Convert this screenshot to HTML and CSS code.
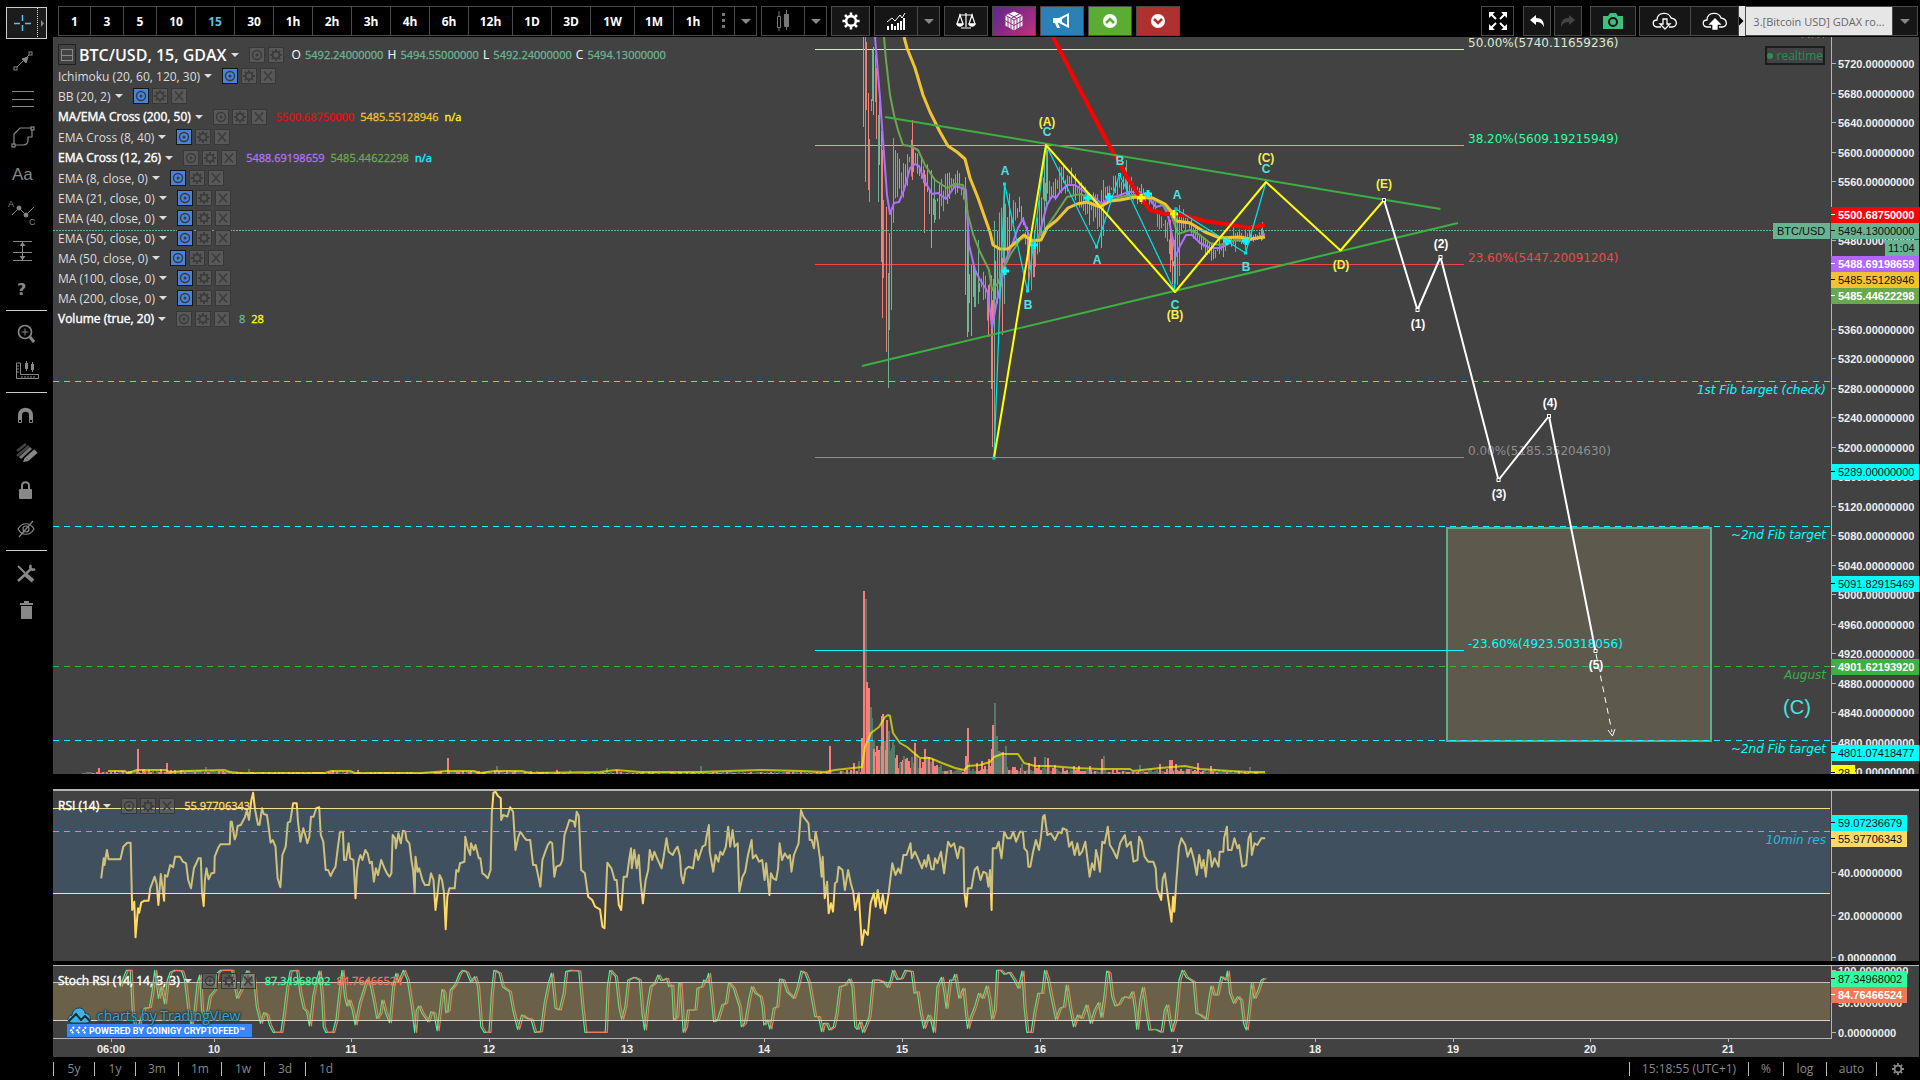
FILE: index.html
```html
<!DOCTYPE html>
<html lang="en">
<head>
  <meta charset="UTF-8">
  <title>BTC/USD, 15, GDAX</title>
  <link rel="stylesheet" href="styles.css">
</head>
<body>

  <!-- Shared icons -->
  <svg class="defs">
    <symbol id="i-eye" viewBox="0 0 14 14"><circle cx="7" cy="7" r="4.5" fill="none" stroke="#3a3a3a" stroke-width="1.4"/><circle cx="7" cy="7" r="1.5" fill="#3a3a3a"/></symbol>
    <symbol id="i-gear" viewBox="0 0 14 14"><circle cx="7" cy="7" r="3.4" fill="none" stroke="currentColor" stroke-width="1.8"/><path d="M7 1v2.500M7 10.500v2.500M1 7h2.500M10.500 7h2.500M2.800 2.800l1.800 1.800M9.400 9.400l1.800 1.800M11.200 2.800L9.400 4.600M4.600 9.400l-1.800 1.800" stroke="currentColor" stroke-width="1.800"/></symbol>
    <symbol id="i-x" viewBox="0 0 14 14"><path d="M3 2.500l8 9M11 2.500l-8 9" stroke="currentColor" stroke-width="1.600"/></symbol>
  </svg>

  <div class="app">
    <nav class="sidebar">
      <button class="tool active" aria-label="Cross"><svg width="41" height="32"><path d="M16.500 8v6M16.500 18v6M8 16.500h6M19 16.500h6" stroke="#5bc0e8" stroke-width="1.500"/><path d="M31.500 1v30" stroke="#ddd" stroke-dasharray="1 1"/><path d="M35 13l3 3.500-3 3.500z" fill="#888"/></svg></button>
      <button class="tool" aria-label="Trend line"><svg width="44" height="32" fill="none" stroke="#888"><rect x="8" y="22" width="3" height="3"/><rect x="23" y="7" width="3" height="3"/><path d="M11 22L23 10"/><path d="M16 14l6-2-2 6z" fill="#888"/></svg></button>
      <button class="tool" aria-label="Channels"><svg width="44" height="32"><path d="M6 8.500h22M6 16.500h22M6 23.500h22" stroke="#888"/></svg></button>
      <button class="tool" aria-label="Shapes"><svg width="44" height="32" fill="none" stroke="#888" stroke-width="1.200"><path d="M8 23V13l6-6h12M26 9v7h-4v3c0 3-2 5-5 5h-8"/><rect x="6" y="23" width="3" height="3"/><rect x="25" y="6" width="3" height="3"/></svg></button>
      <button class="tool aa">Aa</button>
      <button class="tool" aria-label="Patterns"><svg width="44" height="36" fill="none" stroke="#888"><path d="M6 20l7-7 7 7 8-8"/><circle cx="13" cy="13" r="2" fill="#888"/><circle cx="20" cy="20" r="2" fill="#888"/><text x="2" y="12" class="tiny">A</text><text x="23" y="30" class="tiny">C</text></svg></button>
      <button class="tool" aria-label="Forecast"><svg width="44" height="32"><path d="M7 6.500h19M7 17.500h19M7 25.500h19M16.500 7v18" stroke="#888"/><path d="M13.500 11l3-4 3 4zM13.500 21l3 4 3-4z" fill="#888"/></svg></button>
      <button class="tool help">?</button>
      <hr>
      <button class="tool" aria-label="Zoom in"><svg width="44" height="32" fill="none" stroke="#888"><circle cx="19" cy="15" r="6.500" stroke-width="1.700"/><path d="M15.500 15h7M19 11.500v7"/><path d="M24 20l4 5" stroke-width="3"/></svg></button>
      <button class="tool" aria-label="Measure"><svg width="44" height="32" fill="none" stroke="#888"><path d="M10.500 8v15.500h22v-4h-18V8z"/><path d="M11 11h2M11 14h2M11 17h2M16 21v2M19 21v2M22 21v2M25 21v2M28 21v2"/><path d="M20.500 6v10M26.500 7v10"/><path d="M20.500 8v6M26.500 9v6" stroke-width="3"/></svg></button>
      <hr>
      <button class="tool" aria-label="Magnet"><svg width="44" height="32" fill="none" stroke="#888"><path d="M14 23v-7c0-7 11-7 11 0v7" stroke-width="4"/><path d="M12.500 20.500h3v3h-3zM23.500 20.500h3v3h-3z" fill="#000"/></svg></button>
      <button class="tool" aria-label="Draw"><svg width="44" height="32"><path d="M11 14L20 7M11 19L23 9" stroke="#444" stroke-width="2.500"/><path d="M14 21L25 11" stroke="#777" stroke-width="3"/><path d="M21 22L30 14" stroke="#888" stroke-width="5"/><path d="M17 25l2-5 4 4z" fill="#888"/></svg></button>
      <button class="tool" aria-label="Lock"><svg width="44" height="32"><rect x="13" y="14" width="13" height="10" rx="1" fill="#888"/><path d="M16 14v-3c0-5 7-5 7 0v3" fill="none" stroke="#888" stroke-width="2"/></svg></button>
      <button class="tool" aria-label="Hide"><svg width="44" height="32" fill="none" stroke="#888" stroke-width="1.200"><path d="M12 16c4-7 12-7 16 0-4 7-12 7-16 0zM27 8L13 24"/><circle cx="20" cy="16" r="3"/></svg></button>
      <hr>
      <button class="tool" aria-label="Tools"><svg width="44" height="32" fill="none" stroke="#888"><path d="M12 9l7 7" stroke-width="2"/><path d="M19 17l8 7" stroke-width="4"/><path d="M12 24L25 12" stroke-width="2.500"/><path d="M25 8c-2 3 1 6 4 4" stroke-width="2.500"/></svg></button>
      <button class="tool" aria-label="Remove"><svg width="44" height="32" fill="#888"><path d="M15 11h11v13H15zM14 8h13v2H14zM18 6h5v2h-5z"/></svg></button>
    </nav>

    <main class="workspace">
      <header class="topbar">
        <div class="group intervals">
          <button class="one">1</button><button class="one">3</button><button class="one">5</button><button>10</button><button class="on">15</button><button>30</button><button>1h</button><button>2h</button><button>3h</button><button>4h</button><button>6h</button><button class="long">12h</button><button>1D</button><button>3D</button><button class="long">1W</button><button>1M</button><button>1h</button><button class="narrow" aria-label="More"><svg width="4" height="18" fill="#777"><path d="M0 1h3v3H0zM0 7h3v3H0zM0 13h3v3H0z"/></svg></button><button class="narrow caret" aria-label="Intervals"></button>
        </div>
        <div class="group">
          <button class="icon" aria-label="Chart style"><svg width="14" height="24" fill="none" stroke="#777"><path d="M3 2v20M10.500 1v20"/><path d="M1.500 7.500h3v11h-3z" fill="#000"/><path d="M8.500 5.500h4v12h-4z" fill="#777"/></svg></button><button class="narrow caret" aria-label="Styles"></button>
        </div>
        <div class="group"><button class="icon dark gear" aria-label="Settings"><svg width="20" height="20"><use href="#i-gear"/></svg></button></div>
        <div class="group">
          <button class="icon dark" aria-label="Indicators"><svg width="20" height="18" fill="none" stroke="#fff"><path d="M1 10l5-4 3 3 5-6 2 3 3-5"/><path d="M2 14v4M6 12v6M9 14v4M12 11v7M15 9v9M18 6v12" stroke-width="2"/></svg></button><button class="narrow dark caret" aria-label="Templates"></button>
        </div>
        <div class="group"><button class="icon dark" aria-label="Compare"><svg width="20" height="18" fill="none" stroke="#fff" stroke-width="1.200"><path d="M3 3h14M10 1v14M5 16h10M4 3L1 12h6zM16 3l-3 9h6z"/><path d="M1 12c1 3 5 3 6 0zM13 12c1 3 5 3 6 0z" fill="#fff"/></svg></button></div>
        <div class="group"><button class="icon cube" aria-label="Blocks"><svg width="22" height="22" viewBox="0 0 22 22" fill="#fff" stroke="#8a2a80" stroke-width="1"><path d="M11 1l9 4v11l-9 5-9-5V5z"/><path d="M11 10v11M2 5l9 5 9-5M5 3.500l9 5v11M17 3.500l-9 5v11M2 10.500l9 5 9-5M5 7v11M17 7v11" fill="none"/></svg></button></div>
        <div class="group"><button class="icon blue" aria-label="Alerts"><svg width="18" height="16" fill="#fff"><path d="M0 5h6v5H0zM2 10h3l2 5H4zM6 5l10-5v15L6 10z"/><path d="M9 6l5-3v9l-5-3z" fill="#2b80b5"/></svg></button></div>
        <div class="group"><button class="icon green" aria-label="Buy"><svg width="16" height="16"><circle cx="8" cy="8" r="7" fill="#fff"/><path d="M4 10l4-4 4 4" fill="none" stroke="#5aad32" stroke-width="2.500"/></svg></button></div>
        <div class="group"><button class="icon red" aria-label="Sell"><svg width="16" height="16"><circle cx="8" cy="8" r="7" fill="#fff"/><path d="M4 6l4 4 4-4" fill="none" stroke="#b03030" stroke-width="2.500"/></svg></button></div>

        <div class="right">
          <button class="w34" aria-label="Fullscreen"><svg width="18" height="18" fill="#fff" stroke="#fff" stroke-width="2"><path d="M2 2l5 5M16 2l-5 5M2 16l5-5M16 16l-5-5"/><path d="M0 0h6L0 6zM18 0h-6l6 6zM0 18h6l-6-6zM18 18h-6l6-6z" stroke="none"/></svg></button>
          <button class="dark w28" aria-label="Undo"><svg width="14" height="12" fill="#fff"><path d="M0 5l6-5v3c6 0 8 3 8 9-2-4-4-5-8-5v3z"/></svg></button>
          <button class="dark w28 redo" aria-label="Redo"><svg width="14" height="12" fill="#444"><path d="M14 5L8 0v3C2 3 0 6 0 12c2-4 4-5 8-5v3z"/></svg></button>
          <button class="dark w46" aria-label="Snapshot"><svg width="20" height="16"><path d="M0 3h5l2-3h6l2 3h5v13H0z" fill="#41bd80"/><circle cx="10" cy="9" r="4" fill="none" stroke="#111" stroke-width="2"/></svg></button>
          <div class="group">
            <button class="dark w52" aria-label="Load"><svg width="26" height="18" fill="none" stroke="#fff" stroke-width="1.300"><path d="M9 15H5c-5-1-5-7 0-7 0-8 12-9 14-2 7 1 7 9 1 9h-3"/><path d="M11 7h4v5h3l-5 5-5-5h3z"/></svg></button><button class="dark w48" aria-label="Save"><svg width="26" height="18" fill="none" stroke="#fff" stroke-width="1.300"><path d="M9 15H5c-5-1-5-7 0-7 0-8 12-9 14-2 7 1 7 9 1 9h-3"/><path d="M11 17h4v-5h3l-5-5-5 5h3z" fill="#fff"/></svg></button><span class="notch"></span><button class="layout">3.[Bitcoin USD] GDAX ro...</button><button class="dark narrow caret last" aria-label="Layouts"></button>
          </div>
        </div>
      </header>

      <section class="pane">
        <svg id="price" viewBox="53 37 1866 737"></svg>
        <div class="legend" id="legend">
          <div class="title"><button class="collapse" aria-label="Collapse"></button><span class="symbol">BTC/USD, 15, GDAX</span><i></i>
            <button class="mini"><svg><use href="#i-eye"/></svg></button><button class="mini"><svg><use href="#i-gear"/></svg></button>
            <span class="ohlc">O <b>5492.24000000</b> H <b>5494.55000000</b> L <b>5492.24000000</b> C <b>5494.13000000</b></span>
          </div>
        </div>
        <span class="realtime">realtime</span>
      </section>

      <section class="pane rsi">
        <svg id="rsi" viewBox="53 791 1866 170"></svg>
        <div class="legend" id="rsiLegend"></div>
      </section>

      <section class="pane stoch">
        <svg id="stoch" viewBox="53 966 1866 91"></svg>
        <div class="legend" id="stochLegend"></div>
        <div class="brand">
          <a href="#" class="tv"><svg width="24" height="17"><path d="M6 16c-6 0-7-7-1-8C6-1 17-1 18 6c7 1 7 10 1 10z" fill="#3bb3e4" stroke="#1d3c4c"/><path d="M2 14l7-7 5 6 4-4 5 5" fill="none" stroke="#1d2c34" stroke-width="2"/></svg><span>charts by TradingView</span></a>
          <a href="#" class="feed"><svg width="20" height="9" fill="none" stroke="#fff" stroke-width="2"><path d="M5 1L2 4.500 5 8M11 1L8 4.500 11 8M17 1l-3 3.500L17 8" stroke-dasharray="2 1"/></svg>POWERED BY COINIGY CRYPTOFEED™</a>
        </div>
      </section>

      <footer class="bottombar">
        <div class="ranges"><button class="short">5y</button><button class="short">1y</button><button>3m</button><button>1m</button><button>1w</button><button class="short">3d</button><button class="short">1d</button></div>
        <div class="scale"><button class="clock">15:18:55 (UTC+1)</button><button>%</button><button>log</button><button class="auto">auto</button><button aria-label="Properties"><svg width="14" height="14"><use href="#i-gear"/></svg></button></div>
      </footer>
    </main>
  </div>

  <script>
    const UP = '#6ab392', DOWN = '#f47f7b';

    // small seeded generator so the chart is the same on every load
    let seed = 11;
    function rnd() {
      seed = (seed * 16807) % 2147483647;
      return seed / 2147483647;
    }

    function line(x1, y1, x2, y2, color, extra) {
      return `<path d="M${x1} ${y1}L${x2} ${y2}" stroke="${color}" ${extra || ''}/>`;
    }

    function poly(points, color, width, extra) {
      return `<polyline points="${points}" fill="none" stroke="${color}" stroke-width="${width || 1}" stroke-linejoin="round" ${extra || ''}/>`;
    }

    function text(x, y, str, cls, color) {
      return `<text x="${x}" y="${y}" class="${cls}" fill="${color}">${str}</text>`;
    }

    function tag(y, str, bg, color, x2) {
      return `<rect x="1831" y="${y}" width="${(x2 || 1919) - 1831}" height="16" fill="${bg}"/>` +
        line(1831, y + 7.5, 1835, y + 7.5, color) +
        text(1838, y + 12, str, color === '#fff' ? 'axis' : 'tag', color);
    }

    function tick(y, str) {
      return line(1832, y, 1836, y, '#b5b5b5') + text(1838, y + 4, str, 'axis', '#eee');
    }

    // linear interpolation over [x, a, b] knots
    function at(knots, x) {
      for (let i = 1; i < knots.length; i++) {
        if (x <= knots[i][0]) {
          const p = knots[i - 1], q = knots[i], t = (x - p[0]) / (q[0] - p[0]);
          return p.map((v, k) => v + (q[k] - v) * t);
        }
      }
      return knots[knots.length - 1];
    }

    function shift(str, x0, sx, y0, sy, dx) {
      return str.split(' ').map(p => {
        const [x, y] = p.split(',').map(Number);
        return (x0 + x / sx + (dx || 0)).toFixed(1) + ',' + (y0 + y / sy).toFixed(1);
      }).join(' ');
    }

    // ---- price pane ----
    function drawPrice() {
      let s = '';

      // volume
      const bars = [[98,6,0],[137,25,0],[143,5,0],[160,5,0],[166,11,0],[205,7,1],[248,5,1],[332,4,0],[357,4,0],[447,16,0],[496,8,1],[556,4,0],[569,4,1],[606,6,1],[616,4,0],[700,8,1],[829,28,0],[853,11,0],[858,13,1],
        [861,36,0],[865,175,1],[863,183,0],[866,92,0],[868,86,0],[870,67,1],[871,56,1],[873,34,1],[873,25,0],[875,18,1],[876,28,0],[878,24,0],[880,28,1],[881,58,0],[882,60,0],[884,33,1],[885,24,0],[886,54,0],[888,43,1],[890,23,1],[891,26,1],[892,32,1],[893,29,1],[895,16,0],[896,19,0],[899,11,1],[903,18,1],[906,16,0],[908,13,0],[911,17,1],[914,31,0],[916,20,1],[919,15,0],[922,12,0],[924,25,0],[926,18,1],[928,17,0],[932,15,0],
        [965,18,0],[967,46,0],[968,12,1],[976,11,0],[981,13,0],[988,15,0],[991,25,0],[992,49,0],[994,71,1],[996,38,1],[998,23,1],[1000,22,1],[1002,22,0],[1004,18,1],[1005,28,1],[1021,10,1],[1028,11,0],[1034,17,0],[1044,17,1],[1047,16,0],[1054,9,0],[1073,8,0],[1078,8,0],[1089,8,0],[1101,15,0],[1103,18,1],[1139,9,1],[1159,10,0],[1169,14,0],[1171,14,0],[1175,10,0],[1197,11,0],[1210,8,0],[1249,7,1]];
      const volEnv = [[82,2],[130,3],[220,4],[240,2],[430,2],[520,3],[560,1],[830,2],[860,5],[862,25],[895,16],[915,14],[935,12],[945,5],[965,4],[985,10],[1005,13],[1015,8],[1045,9],[1070,5],[1130,3],[1165,6],[1190,5],[1220,4],[1265,1]];
      for (let x = 82; x < 1265; x += 2) {
        const h = Math.ceil(at(volEnv, x)[1] * (0.25 + rnd() * 0.75));
        s += `<rect x="${x}" y="${774 - h}" width="2" height="${h}" fill="${rnd() > 0.5 ? '#f47f7b' : '#557a6a'}"/>`;
      }
      bars.forEach(b => s += `<rect x="${b[0]}" y="${774 - b[1]}" width="2" height="${b[1]}" fill="${b[2] ? '#557a6a' : '#f47f7b'}"/>`);
      s += poly('108,771 125,771 128,773 137,770 165,770 170,772 186,771 224,770 230,772 240,773 325,773 331,771 350,771 355,773 422,773 447,771 474,771 480,773 495,771 522,771 530,773 600,772 616,770 640,772 700,772 760,770 800,771 825,772 835,770 862,767 865,747 871,733 879,727 885,717 888,715 890,716 893,733 900,743 907,747 914,753 920,758 930,758 942,763 955,768 964,770 968,766 980,765 990,762 994,757 1002,754 1018,754 1024,763 1035,766 1050,766 1075,768 1100,769 1130,769 1133,771 1160,768 1185,766 1200,769 1230,771 1250,772 1265,772', '#ffff00', 2, 'opacity="0.65"');

      // horizontal levels
      [[49.5,'#d9ead3','50.00%(5740.11659236)'],[145.5,'#2fff9f','38.20%(5609.19215949)'],[264.5,'#ee4a4a','23.60%(5447.20091204)'],[457.5,'#8e8e8e','0.00%(5185.35204630)'],[650.5,'#00ffff']].forEach(f => {
        s += line(815, f[0], 1464, f[0], f[1]);
        if (f[2]) s += text(1468, f[0] - 2.5, f[2], 'fib', f[1]);
      });

      // candles
      const wicks = [[863,37,127,0],[865,37,182,1],[866,42,110,0],[868,93,190,0],[869,139,202,1],[871,99,111,1],[872,50,101,1],[873,47,115,0],[875,55,102,1],[876,68,139,0],[878,115,202,1],[879,101,165,0],[881,131,262,0],[882,150,318,0],[883,200,278,1],[886,207,352,0],[888,273,388,1],[889,233,330,1],[891,210,310,1],[893,138,223,1],[912,120,180,0],[924,170,233,0],[931,170,248,0],[934,180,223,1],[965,177,295,0],[967,230,337,0],[968,240,332,1],[971,270,336,0],[974,265,307,1],[978,240,304,1],[988,285,337,0],[991,290,389,0],[992,300,447,0],[994,221,446,1],[1002,258,335,0],[1004,184,304,1],[1028,240,291,0],[1031,235,290,1],[1034,230,277,0],[1044,150,235,1],[1046,145,210,1],[1047,150,190,0],[1101,190,248,0],[1103,180,236,1],[1126,160,195,1],[1170,220,272,0],[1172,240,284,0],[1174,240,292,0],[1177,215,285,1],[1179,205,276,1],[1262,222,240,1]];
      const env = [[893,150,225],[905,143,198],[912,130,180],[920,152,185],[932,168,232],[940,178,225],[950,168,200],[955,165,195],[964,178,205],[967,230,330],[976,260,312],[984,268,306],[990,280,335],[996,222,330],[1003,190,320],[1010,190,245],[1016,200,228],[1021,190,228],[1026,220,255],[1031,240,285],[1036,225,275],[1041,185,245],[1046,148,215],[1050,170,198],[1055,178,210],[1060,162,198],[1070,165,195],[1080,180,210],[1090,190,226],[1100,195,230],[1106,180,208],[1114,173,202],[1126,165,200],[1136,183,207],[1148,183,203],[1155,198,215],[1160,205,240],[1168,215,242],[1173,245,288],[1178,208,285],[1182,208,228],[1192,215,240],[1202,235,258],[1212,242,262],[1222,236,260],[1230,225,250],[1240,228,254],[1250,224,248],[1265,228,240]];
      for (let x = 893.5; x < 1265; x += 2) {
        const [, hi, lo] = at(env, x);
        const a = hi + (lo - hi) * rnd() * 0.5, b = lo - (lo - hi) * rnd() * 0.5;
        s += line(x, a.toFixed(1), x, b.toFixed(1), rnd() > 0.5 ? UP : DOWN);
      }
      wicks.forEach(w => s += line(w[0] + .5, w[1], w[0] + .5, w[2], w[3] ? UP : DOWN));

      // averages
      s += poly('875,37 880,98 883,140 887,195 890,214 894,203 899,202 904,190 910,168 915,164 919,166 924,180 932,194 938,193 946,199 955,186 962,188 966,190 969,245 975,270 980,280 985,287 988,293 992,328 997,300 1001,285 1005,262 1012,245 1018,228 1023,219 1027,230 1031,240 1038,240 1043,220 1047,205 1052,196 1056,198 1060,192 1067,185 1075,185 1085,192 1095,198 1102,204 1108,198 1118,196 1128,192 1140,192 1150,200 1156,207 1163,205 1168,215 1173,240 1176,256 1180,246 1186,235 1192,235 1200,243 1210,248 1220,248 1228,244 1235,240 1245,241 1255,239 1265,234', '#b070ff', 2);
      s += poly('884,37 886,60 890,95 894,115 898,130 903,145 910,146 918,150 925,165 935,180 947,188 955,184 963,185 968,215 973,234 980,252 985,262 989,270 992,290 998,283 1003,270 1010,255 1020,240 1027,236 1035,241 1043,232 1055,215 1067,197 1080,194 1090,198 1102,206 1112,200 1125,196 1140,194 1150,198 1160,203 1170,212 1178,234 1190,230 1200,235 1210,243 1220,245 1235,240 1265,237', '#6aa84f', 2);
      s += poly('1053,37 1066,62 1075,80 1087,103 1100,128 1110,147 1118,160 1128,179 1140,197 1150,210 1165,214 1175,214 1187,216 1205,221 1225,224 1250,228 1265,225', '#ff0000', 4);
      s += poly('904,37 907,48 915,68 923,95 930,112 935,122 940,132 948,146 957,152 965,159 970,178 978,198 985,218 990,232 993,245 1000,249 1008,249 1015,243 1024,235 1032,241 1041,240 1047,228 1057,220 1068,208 1077,204 1087,202 1100,207 1110,201 1120,200 1135,197 1153,198 1165,204 1172,212 1176,221 1190,223 1205,232 1220,238 1240,237 1250,239 1265,237', '#f1c232', 3);
      [[1005,271],[1034,245],[1088,198],[1109,197],[1148,194],[1227,241],[1246,241]].forEach(p =>
        s += `<path d="M${p[0] - 4} ${p[1]}h8M${p[0]} ${p[1] - 4}v8" stroke="#00ffff" stroke-width="3"/>`);
      [[1141,198],[1174,214]].forEach(p =>
        s += `<path d="M${p[0] - 4} ${p[1]}h8M${p[0]} ${p[1] - 4}v8" stroke="#ffff00" stroke-width="3"/>`);

      s += line(53, 230.5, 1773, 230.5, UP, 'stroke-dasharray="2 1"');

      // target box and dashed levels
      s += '<rect x="1447" y="528" width="264" height="213" fill="#5e594d" stroke="#5fae8b" stroke-width="2"/>';
      s += text(1468, 648, '-23.60%(4923.50318056)', 'fib', '#00ffff') + line(1446, 650.5, 1464, 650.5, '#00ffff');
      [[381.5,'#00ffff','1st Fib target (check)'],[526.5,'#00ffff','~2nd Fib target'],[666.5,'#3cb043','August'],[740.5,'#00ffff','~2nd Fib target']].forEach(l => {
        s += line(53, l[0], 1830, l[0], l[1], 'stroke-dasharray="6 5"') + text(1826, l[0] + 12.5, l[2], 'note', l[1]);
      });
      s += text(1826, 38, 'ATH', 'note', '#3cb043');

      // trend lines
      s += line(885, 117, 1440.5, 209, '#3cb043', 'stroke-width="2"');
      s += line(862, 366, 1458, 223, '#3cb043', 'stroke-width="2"');

      // elliott waves
      s += poly('994,458 1004.5,184 1027.5,291 1046,145 1096.5,247 1119.5,174.5 1174.5,291 1176,209 1245.5,253 1266,182', '#00e5e5', 1.2);
      s += poly('994,458 1046,145 1175,292 1266,182 1340.5,250.5 1384,200', '#ffff00', 2);
      s += poly('1384,200 1417.5,310 1440.5,257 1498.5,480 1549,416 1595.5,651', '#fff', 2);
      s += line(1596, 654, 1612, 732, '#fff', 'stroke-dasharray="6 5"');
      s += '<path d="M1608 730l4.500 6 2.500-7" fill="none" stroke="#fff"/>';
      [[1384,200],[1417.5,310],[1440.5,257],[1498.5,480],[1549,416],[1595.5,651]].forEach(p =>
        s += `<rect x="${p[0] - 1.5}" y="${p[1] - 1.5}" width="3" height="3" fill="#424242" stroke="#fff"/>`);
      [[994,458],[1004.5,184],[1027.5,291],[1096.5,247],[1119.5,174.5],[1176,209],[1245.5,253]].forEach(p =>
        s += `<rect x="${p[0] - 1}" y="${p[1] - 1}" width="2" height="2" fill="#424242" stroke="#00e5e5"/>`);
      [['A',1005,175],['B',1028,309],['C',1047,136],['A',1097,264],['B',1120,165],['A',1177,199],['C',1175,309],['B',1246,271],['C',1266,173]].forEach(w =>
        s += text(w[1], w[2], w[0], 'wave', '#4be3e3'));
      [['(A)',1047,126],['(B)',1175,319],['(C)',1266,162],['(D)',1341,269],['(E)',1384,188]].forEach(w =>
        s += text(w[1], w[2], w[0], 'wave', '#f5ee4a'));
      [['(1)',1418,328],['(2)',1441,248],['(3)',1499,498],['(4)',1550,407],['(5)',1596,669]].forEach(w =>
        s += text(w[1], w[2], w[0], 'wave', '#fff'));
      s += text(1797, 714, '(C)', 'wave big', '#4be3e3');

      // price scale
      s += line(1831.5, 37, 1831.5, 774, '#b5b5b5');
      for (let i = 0; i <= 24; i++) {
        s += tick(Math.floor(63.5 + i * 29.5) + .5, (5720 - i * 40) + '.00000000');
      }
      s += tag(207, '5500.68750000', '#ff0000', '#fff');
      s += `<rect x="1773" y="223" width="57" height="16" fill="${UP}"/>` + text(1777, 235, 'BTC/USD', 'tag', '#111');
      s += tag(223, '5494.13000000', UP, '#111');
      s += `<rect x="1885" y="240" width="34" height="16" fill="${UP}"/>` + text(1888, 252, '11:04', 'tag', '#111');
      s += tag(256, '5488.69198659', '#b266ff', '#fff');
      s += tag(272, '5485.55128946', '#f1c232', '#111');
      s += tag(288, '5485.44622298', '#6aa84f', '#fff');
      s += tag(464, '5289.00000000', '#00ffff', '#111');
      s += tag(576, '5091.82915469', '#00ffff', '#111');
      s += tag(659, '4901.62193920', '#3cb043', '#fff');
      s += tag(745, '4801.07418477', '#00ffff', '#111');
      s += tag(765, '28', '#ffff00', '#111', 1855);
      document.getElementById('price').innerHTML = s;
    }

    // ---- RSI pane ----
    const RSI_A = '150,295 156,235 158,255 164,210 168,238 197,238 204,200 214,188 222,188 226,390 231,365 234,472 240,385 243,398 248,368 256,362 266,362 270,325 281,290 286,312 290,375 296,282 304,362 306,285 312,290 319,255 326,262 331,230 343,230 350,245 358,250 363,300 370,325 377,265 383,250 388,235 394,235 397,335 401,378 404,300 408,265 413,298 420,280 427,278 428,230 436,205 442,193 465,193 467,125 470,125 477,178 481,165 484,138 492,135 502,112 507,90 512,120 518,60 522,38 527,90 534,134 538,134 544,85 548,102 556,105 560,140 565,188 570,180 577,200 582,295 589,322 594,225 602,200 607,128 613,125 620,70 629,70 632,125 638,185 645,145 650,165 655,190 660,170 664,110 670,110 677,85 684,82 688,165 694,185 700,270 706,270 712,288 718,272 724,260 730,200 735,155 742,155 745,240 750,240 756,190 760,235 768,240 773,355 777,270 781,240 785,225 790,240 797,210 803,222 808,250 813,245 818,305 823,265 828,285 836,240 844,265 850,280 856,290 861,280 864,165 870,175 872,205 878,160 884,190 889,152 895,155 898,180 905,190 910,240 914,270 918,340 920,230 925,275 929,265 937,300 943,315 953,315 958,280 964,300 969,390 974,340 979,285 985,300 990,340 994,448 998,350 1003,325 1010,325 1016,325 1020,270 1025,275 1029,250 1040,245 1042,170 1048,205 1054,225 1056,190 1063,210 1067,195 1075,235 1079,235 1084,280 1090,285 1097,295 1104,270 1107,100 1111,38 1116,35 1122,48 1129,55 1130,120 1135,105 1145,110 1152,82 1159,95 1165,210 1172,170 1177,155 1186,172 1192,180 1201,180 1208,255 1215,255 1221,290 1226,320 1231,240 1238,215 1244,195 1250,185 1255,190 1260,290 1265,260 1275,255 1280,240 1285,165 1292,140 1297,120 1308,125 1311,140 1315,95 1320,108 1326,270 1335,280 1343,350 1353,360 1360,380 1372,388 1378,440 1383,445 1390,248 1400,265 1408,300 1413,300 1418,375 1424,390 1430,290 1438,290 1444,235 1448,205 1450,265 1456,210 1462,265 1467,225 1471,300 1477,370 1484,300 1490,270 1494,210 1500,240 1505,215 1512,235 1523,265 1528,230 1535,175 1540,215 1550,225 1556,210 1562,200';
    const RSI_B = '0,230 3,285 8,310 14,268 22,260 33,265 40,210 46,240 50,225 57,200 64,195 67,170 73,135 75,215 84,275 90,225 97,245 102,215 108,225 116,200 122,140 127,200 133,150 138,200 146,190 150,335 158,290 165,275 172,225 181,180 184,235 192,225 200,245 208,240 214,300 218,250 226,345 230,280 236,295 243,300 248,265 252,190 258,240 265,220 273,235 278,225 282,275 288,225 300,190 306,90 312,110 325,130 328,180 333,180 339,205 343,155 348,185 354,235 358,290 361,230 366,355 372,305 376,400 382,370 387,395 392,310 397,305 401,260 411,270 417,330 425,270 432,310 438,335 443,390 452,340 455,400 460,495 466,450 475,465 482,370 490,340 495,380 500,330 507,385 513,345 519,400 527,345 537,250 545,285 552,265 558,280 565,225 573,225 583,190 586,235 594,215 600,230 612,265 618,240 623,260 628,225 636,268 641,268 645,235 651,250 660,215 668,280 673,230 678,185 685,200 693,190 702,235 708,200 717,205 719,335 724,380 728,325 737,325 745,270 752,260 760,300 767,275 775,280 780,320 784,270 788,390 791,205 800,205 806,185 813,235 820,155 828,175 836,175 843,155 850,185 860,155 867,155 871,205 878,215 881,260 886,260 893,215 900,180 908,210 913,170 918,110 922,105 929,165 938,160 948,180 958,155 965,160 968,145 978,150 984,200 991,185 998,225 1005,190 1010,225 1017,215 1025,185 1036,290 1042,250 1048,270 1052,210 1057,235 1062,275 1068,185 1074,190 1082,140 1087,195 1095,210 1105,235 1113,190 1125,165 1130,200 1140,185 1147,245 1157,240 1161,170 1168,185 1175,230 1184,245 1197,245 1203,265 1206,325 1217,360 1221,295 1226,280 1234,350 1243,425 1247,350 1250,395 1255,310 1262,200 1268,175 1278,195 1284,230 1292,205 1300,240 1307,285 1313,225 1319,265 1324,240 1330,290 1336,210 1340,215 1345,260 1352,235 1362,260 1365,215 1374,215 1376,175 1383,140 1386,210 1395,210 1402,175 1410,205 1414,195 1422,260 1432,255 1438,175 1443,160 1446,225 1453,190 1460,195 1470,175 1480,175';

    function drawRsi() {
      let s = poly(shift(RSI_A, 40, 2.45, 780, 3) + ' ' + shift(RSI_B, 680, 2.529, 780, 3), '#ffd966', 2);
      s += line(53, 831.5, 1830, 831.5, '#00ffff', 'stroke-dasharray="6 5"') + text(1826, 844, '10min res', 'note', '#12d3dc');
      s += '<rect x="53" y="808" width="1777" height="86" fill="#407ab2" fill-opacity="0.25"/>';
      s += line(53, 808.5, 1830, 808.5, '#f3e08c') + line(53, 893.5, 1830, 893.5, '#f0e2a8');
      s += line(1831.5, 791, 1831.5, 961, '#b5b5b5');
      s += tick(872.5, '40.00000000') + tick(915.5, '20.00000000') + tick(957.5, '0.00000000');
      s += tag(815, '59.07236679', '#00ffff', '#111', 1907) + tag(831, '55.97706343', '#ffd966', '#111', 1907);
      document.getElementById('rsi').innerHTML = s;
    }

    // ---- Stochastic RSI pane ----
    const K_A = '196,620 205,590 212,571 221,571 226,690 232,740 240,740 248,710 255,685 268,682 274,640 281,571 290,655 297,620 305,672 312,600 319,577 330,571 347,573 354,600 362,685 370,735 378,690 385,610 391,585 396,690 403,730 408,700 415,650 428,630 434,580 442,571 470,571 475,610 482,655 492,630 500,590 507,572 515,590 522,580 530,680 540,730 548,698 556,705 562,735 571,757 590,757 597,700 605,620 613,573 629,571 637,640 645,685 653,695 660,738 668,650 675,610 684,573 690,650 694,740 700,757 717,757 725,720 734,620 740,571 746,650 752,678 757,660 765,690 772,735 782,670 790,640 800,600 808,610 815,650 825,715 833,700 838,660 847,700 856,728 864,620 872,580 878,605 890,571 900,600 910,680 918,757 922,690 928,678 936,700 950,725 958,695 965,700 973,752 980,680 985,628 990,640 994,698 1000,690 1005,630 1016,615 1028,580 1035,571 1045,577 1055,605 1065,590 1072,620 1080,740 1088,757 1100,757 1106,640 1112,571 1125,580 1133,620 1150,635 1158,690 1170,748 1180,705 1192,715 1203,718 1212,757 1226,755 1235,670 1245,610 1253,580 1262,685 1272,690 1282,640 1288,575 1300,571 1320,573 1328,680 1335,757 1385,757 1390,620 1396,571 1410,590 1418,680 1425,718 1433,680 1440,600 1455,592 1468,600 1475,700 1481,750 1487,680 1495,620 1505,610 1514,585 1522,602 1535,595 1540,620 1548,615 1552,720 1560,710 1565,610';
    const K_B = '0,610 8,757 14,740 19,690 38,690 43,625 55,620 60,600 66,605 72,580 78,640 85,725 95,718 106,675 115,670 123,608 135,625 143,655 150,680 155,740 163,730 175,650 181,620 190,640 203,650 208,680 212,735 221,720 227,747 236,685 245,680 252,597 260,600 270,635 287,655 297,620 306,573 316,580 326,610 333,660 341,710 350,710 358,755 363,730 370,730 377,750 388,740 395,700 403,620 417,615 428,597 435,620 442,740 448,748 455,725 462,757 470,735 478,710 487,600 500,600 513,605 525,622 532,600 538,571 548,598 560,595 569,571 585,575 592,640 600,635 608,700 616,745 628,705 634,720 641,757 650,620 661,592 668,640 673,685 682,600 690,600 695,583 705,655 716,625 722,700 727,745 735,710 745,680 755,640 765,655 775,618 782,660 788,718 795,690 801,571 810,571 820,583 832,577 845,600 855,625 865,573 870,680 877,757 888,757 895,700 905,640 915,640 922,571 930,600 938,650 950,718 960,685 970,680 977,615 985,680 995,740 1005,705 1015,715 1027,675 1038,730 1048,690 1058,668 1065,712 1072,650 1079,573 1085,580 1092,650 1100,678 1110,672 1118,655 1125,650 1135,655 1143,635 1150,690 1155,748 1163,660 1170,622 1178,690 1186,750 1200,748 1217,757 1225,690 1231,675 1237,720 1243,755 1252,720 1262,600 1270,571 1280,592 1298,605 1305,700 1315,705 1330,718 1338,650 1343,618 1350,645 1358,645 1368,590 1380,600 1384,573 1390,640 1400,670 1410,650 1418,660 1425,730 1432,750 1438,690 1445,610 1452,655 1460,635 1470,600 1478,595';

    function drawStoch() {
      let s = poly(shift(K_A, 40, 2.45, 780, 3) + ' ' + shift(K_B, 680, 2.529, 780, 3), '#2fff9f', 1.2);
      s += poly(shift(K_A, 40, 2.45, 780, 3, 2) + ' ' + shift(K_B, 680, 2.529, 780, 3, 2), '#f07a58', 1.2);
      s += '<rect x="53" y="982" width="1777" height="38" fill="#b79a54" fill-opacity="0.35"/>';
      s += line(53, 982.5, 1830, 982.5, '#c8c0c0') + line(53, 1020.5, 1830, 1020.5, '#ddd3c8');
      s += line(1831.5, 966, 1831.5, 1038.5, '#b5b5b5') + line(53, 1038.5, 1832, 1038.5, '#b5b5b5');
      s += tick(970.5, '100.00000000') + tick(1002.5, '50.00000000') + tick(1032.5, '0.00000000');
      s += tag(971, '87.34968002', '#2fffa0', '#111', 1907) + tag(987, '84.76466524', '#f0785a', '#fff', 1907);
      [[111,'06:00'],[214,10],[351,11],[489,12],[627,13],[764,14],[902,15],[1040,16],[1177,17],[1315,18],[1453,19],[1590,20],[1728,21]].forEach(t => {
        s += line(t[0] + .5, 1039, t[0] + .5, 1042, '#b5b5b5') + text(t[0], 1053, t[1], 'time', '#eee');
      });
      document.getElementById('stoch').innerHTML = s;
    }

    // ---- legends ----
    function addRow(id, name, hidden, values) {
      const row = document.createElement('div');
      row.className = 'row' + (hidden ? '' : ' live');
      row.innerHTML = `<span class="name">${name}</span><i></i>
        <button class="mini${hidden ? ' hid' : ''}"><svg><use href="#i-eye"/></svg></button><button class="mini"><svg><use href="#i-gear"/></svg></button><button class="mini"><svg><use href="#i-x"/></svg></button>` +
        (values || []).map(v => `<span class="val ${v[1]}">${v[0]}</span>`).join('');
      document.getElementById(id).appendChild(row);
    }

    drawPrice();
    drawRsi();
    drawStoch();

    addRow('legend', 'Ichimoku (20, 60, 120, 30)', true);
    addRow('legend', 'BB (20, 2)', true);
    addRow('legend', 'MA/EMA Cross (200, 50)', false, [['5500.68750000', 'c-red'], ['5485.55128946', 'c-gold'], ['n/a', 'c-yellow']]);
    addRow('legend', 'EMA Cross (8, 40)', true);
    addRow('legend', 'EMA Cross (12, 26)', false, [['5488.69198659', 'c-purple'], ['5485.44622298', 'c-green'], ['n/a', 'c-cyan']]);
    ['EMA (8, close, 0)', 'EMA (21, close, 0)', 'EMA (40, close, 0)', 'EMA (50, close, 0)', 'MA (50, close, 0)', 'MA (100, close, 0)', 'MA (200, close, 0)'].forEach(n => addRow('legend', n, true));
    addRow('legend', 'Volume (true, 20)', false, [['8', 'c-up'], ['28', 'c-yellow']]);
    addRow('rsiLegend', 'RSI (14)', false, [['55.97706343', 'c-rsi']]);
    addRow('stochLegend', 'Stoch RSI (14, 14, 3, 3)', false, [['87.34968002', 'c-k'], ['84.76466524', 'c-d']]);
  </script>

</body>
</html>
```

FILE: styles.css
```css
* {
  box-sizing: border-box;
}

body {
  margin: 0;
  background: #000;
  color: #fff;
  font-family: "Open Sans", "Noto Sans", sans-serif;
  font-size: 12px;
}

button {
  font: inherit;
  color: inherit;
  padding: 0;
  margin: 0;
  background: none;
  border: none;
  cursor: pointer;
}

a {
  text-decoration: none;
}

.defs {
  display: none;
}

.app {
  display: flex;
}

/* left tools */
.sidebar {
  width: 53px;
  flex: none;
  padding: 4px 6px;
}

.tool {
  display: flex;
  align-items: center;
  width: 44px;
  height: 38px;
  color: #888;
}

.tool svg {
  display: block;
}

.tool.active {
  width: 41px;
  height: 32px;
  margin: 3px 0;
  background: #1c1c1c;
  outline: 1px solid #ccc;
  outline-offset: -1px;
}

.tool.aa {
  padding-left: 6px;
  font-family: "Liberation Sans", sans-serif;
  font-size: 17px;
}

.tool.help {
  padding-left: 11px;
  font-family: "DejaVu Sans", sans-serif;
  font-size: 16px;
  font-weight: bold;
}

.tiny {
  font-family: "Liberation Sans", sans-serif;
  font-size: 9px;
  fill: #888;
  stroke: none;
}

.sidebar hr {
  height: 1px;
  width: 41px;
  margin: 2px 0 3px;
  border: none;
  background: #ccc;
}

.workspace {
  flex: 1;
  min-width: 0;
  padding-right: 1px;
}

/* top bar */
.topbar {
  display: flex;
  gap: 4px;
  height: 37px;
  padding: 6px 1px 1px 5px;
}

.group {
  display: flex;
}

.topbar button {
  display: flex;
  align-items: center;
  justify-content: center;
  height: 30px;
  border: 1px solid #4a4a4a;
}

.group button + button {
  border-left: none;
}

.intervals button {
  width: 39px;
  font-weight: bold;
}

.intervals .one {
  width: 33px;
}

.intervals .long {
  width: 44px;
}

.intervals .on {
  color: #5bc0de;
}

.topbar .narrow {
  width: 22px;
}

.caret::after {
  content: "";
  border: 5px solid transparent;
  border-top-color: #888;
  border-bottom: none;
}

.topbar .icon {
  width: 44px;
}

.topbar .gear {
  width: 39px;
}

.topbar .dark {
  background: #161616;
}

.topbar .cube {
  background: linear-gradient(135deg, #5b2a8c, #8a2a86 50%, #c0327c);
}

.topbar .blue {
  background: #2b80b5;
}

.topbar .green {
  background: #5aad32;
}

.topbar .red {
  background: #b03030;
}

.right {
  display: flex;
  margin-left: auto;
  gap: 3px;
}

.topbar .w34 {
  width: 33px;
  margin-right: 6px;
}

.topbar .w28 {
  width: 28px;
}

.topbar .redo {
  margin-right: 5px;
}

.topbar .w46 {
  width: 46px;
}

.topbar .w52 {
  width: 52px;
}

.topbar .w48 {
  width: 48px;
}

.notch {
  width: 6px;
  background: #e6e6e6;
  clip-path: polygon(0 0, 100% 0, 100% 100%, 0 100%, 0 65%, 75% 50%, 0 35%);
}

.topbar .layout {
  width: 148px;
  background: #e6e6e6;
  color: #666;
  font-size: 11px;
}

.topbar .last {
  width: 25px;
}

/* panes */
.pane {
  position: relative;
  background: #424242;
}

.pane > svg {
  display: block;
  width: 100%;
  height: auto;
}

.rsi {
  margin-top: 15px;
  border-top: 2px solid #b5b5b5;
}

.stoch {
  margin-top: 4px;
  border-top: 1px solid #b5b5b5;
}

.axis,
.tag,
.time {
  font-family: "Liberation Sans", sans-serif;
  font-size: 11px;
}

.axis {
  font-weight: bold;
}

.time {
  font-weight: bold;
  text-anchor: middle;
}

.fib {
  font-family: "DejaVu Sans", sans-serif;
  font-size: 12px;
}

.note {
  font-family: "DejaVu Sans", sans-serif;
  font-size: 12px;
  font-style: italic;
  text-anchor: end;
}

.wave {
  font-family: "Liberation Sans", sans-serif;
  font-size: 12px;
  font-weight: bold;
  text-anchor: middle;
}

.wave.big {
  font-size: 20px;
  font-weight: normal;
}

/* legend */
.legend {
  position: absolute;
  top: 6px;
  left: 5px;
}

.rsi .legend,
.stoch .legend {
  top: 4px;
}

.title {
  display: flex;
  align-items: center;
  height: 23px;
}

.collapse {
  position: relative;
  width: 18px;
  height: 21px;
  border: 1px solid #222;
}

.collapse::before {
  content: "";
  position: absolute;
  inset: 4px 2px 3px;
  border: 1px solid #888;
  background: linear-gradient(#888, #888) center / 100% 1px no-repeat;
}

.symbol {
  margin-left: 3px;
  font-size: 16px;
  font-weight: 600;
}

.title i,
.row i {
  margin: 0 10px 0 4px;
  border: 4px solid transparent;
  border-top-color: #ddd;
  border-bottom: none;
}

.ohlc {
  margin-left: 5px;
  white-space: pre;
}

.ohlc b {
  margin: 0 1px;
  color: #6ab392;
  font-size: 11px;
  font-weight: normal;
  -webkit-text-stroke: 0.3px;
}

.row {
  display: flex;
  align-items: center;
  height: 20px;
  color: #ddd;
  white-space: nowrap;
}

.row.live {
  height: 21px;
  color: #fff;
}

.live .name {
  -webkit-text-stroke: 0.4px;
}

.mini {
  display: flex;
  width: 16px;
  height: 16px;
  margin-right: 3px;
  border: 1px solid #383838;
  background: rgba(110, 110, 110, 0.5);
  color: #3c3c3c;
}

.mini.hid {
  background: #4683d9;
  border-color: #161616;
}

.mini svg {
  width: 14px;
  height: 14px;
}

.val {
  margin-left: 6px;
  font-size: 11px;
  -webkit-text-stroke: 0.3px;
}

.c-red { color: #e01010; }
.c-gold { color: #f1c232; }
.c-yellow { color: #ffff00; }
.c-purple { color: #b070ff; }
.c-green { color: #6aa84f; }
.c-cyan { color: #00ffff; }
.c-up { color: #6ab392; }
.c-rsi { color: #ffd966; }
.c-k { color: #2fff9f; }
.c-d { color: #f07a58; }

.realtime {
  position: absolute;
  top: 9px;
  right: 94px;
  width: 60px;
  height: 19px;
  border: 2px solid #1c1c1c;
  color: #2e8b57;
  line-height: 15px;
  text-align: right;
}

.realtime::before {
  content: "";
  position: absolute;
  left: 0;
  top: 5px;
  width: 6px;
  height: 6px;
  border-radius: 50%;
  background: #2e8b57;
}

.brand {
  position: absolute;
  left: 14px;
  bottom: 20px;
}

.tv {
  display: flex;
  align-items: center;
  gap: 6px;
  height: 18px;
  color: #3aa4d6;
  font-size: 14px;
  text-shadow: 0 0 2px #1d2c34, 0 0 2px #1d2c34, 0 0 3px #1d2c34;
}

.feed {
  display: flex;
  align-items: center;
  height: 13px;
  width: 185px;
  padding-left: 2px;
  background: #3a86f8;
  color: #fff;
  font-family: Roboto, sans-serif;
  font-size: 9px;
  font-weight: bold;
  white-space: nowrap;
}

/* footer */
.bottombar {
  display: flex;
  justify-content: space-between;
  height: 23px;
  color: #888;
}

.ranges,
.scale {
  display: flex;
  align-items: center;
}

.bottombar button {
  display: flex;
  align-items: center;
  justify-content: center;
  width: 43px;
  height: 14px;
  border-left: 1px solid #bbb;
}

.bottombar .short {
  width: 41px;
}

.bottombar .clock {
  width: 119px;
}

.bottombar .clock + button {
  width: 35px;
}

.bottombar .auto {
  width: 50px;
}
```
